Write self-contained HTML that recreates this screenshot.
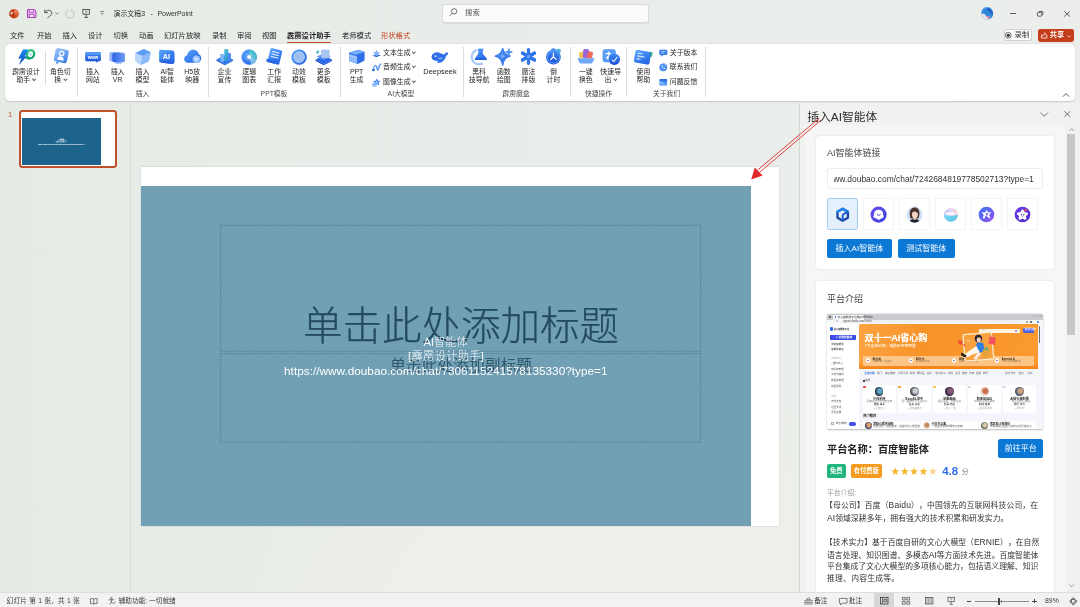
<!DOCTYPE html>
<html lang="zh-CN">
<head>
<meta charset="utf-8">
<title>演示文稿3 - PowerPoint</title>
<style>
html,body{margin:0;padding:0}
html{background:#e8ece8}
body{width:1080px;height:607px;overflow:hidden;position:relative;background:radial-gradient(ellipse 420px 230px at 600px 600px,#f0f0ea 0%,rgba(240,240,234,0) 100%),linear-gradient(90deg,#e6ebe6 0%,#e9ede9 40%,#ebeeea 100%);
 font-family:"Liberation Sans","Noto Sans CJK SC",sans-serif;color:#333;font-size:7.5px;line-height:1;text-spacing-trim:space-all;filter:blur(.3px)}
.abs{position:absolute}
.t{position:absolute;white-space:nowrap;line-height:1}
.c{transform:translateX(-50%);text-align:center}
svg{position:absolute;overflow:visible}

/* ---------- title bar ---------- */
#search{left:441.8px;top:4px;width:205.4px;height:17px;background:#fafbfa;border:0.6px solid #d9dcd9;border-radius:3px;box-shadow:0 0.6px 0 #cdd1cd}
/* ---------- tabs ---------- */
.tab{top:32.3px;font-size:7.3px;color:#1f1f1f}
/* ---------- ribbon ---------- */
#ribbon{left:5px;top:44px;width:1070px;height:56.5px;background:#fff;border-radius:5px;box-shadow:0 0.5px 1.6px rgba(0,0,0,.15)}
.sep{position:absolute;width:0.6px;background:#d9dcd9;top:47px;height:50px}
.rl{font-size:6.9px;color:#262626;line-height:8.5px;top:67.7px;text-align:center;transform:translateX(-50%);position:absolute;white-space:nowrap}
.gl{font-size:6.8px;color:#4a4a4a;top:90.5px;position:absolute;white-space:nowrap;transform:translateX(-50%)}
.sm{font-size:6.9px;color:#262626;position:absolute;white-space:nowrap}
.chv{display:inline-block;width:1.9px;height:1.9px;border-right:.6px solid #6a6a6a;border-bottom:.6px solid #6a6a6a;transform:rotate(45deg) translate(-.8px,-1.3px);margin-left:.6px}
.ri{filter:drop-shadow(0 .4px .7px rgba(70,130,240,.38))}
/* ---------- slide area ---------- */
#thumbpane{left:0;top:102.6px;width:130px;height:489.8px;border-right:0.7px solid #d6dad6}
#thumb{left:19.3px;top:110px;width:93.9px;height:53.6px;border:2px solid #bf512d;border-radius:3.4px;background:#fff}
#thumbin{left:22px;top:118px;width:79px;height:47px;background:#1c648b}
#slidewhite{left:141px;top:167px;width:638px;height:359px;background:#fff;box-shadow:0 0 1px rgba(0,0,0,.25)}
#slideblue{left:141px;top:186px;width:610px;height:340px;background:#719fb4}
.ph{position:absolute;border:0.6px dotted rgba(50,92,112,.75);box-sizing:border-box}
/* ---------- task pane ---------- */
#pane{left:799.2px;top:102.6px;width:280.8px;height:489.8px;background:#f0f2f0;border-left:0.7px solid #d3d7d3}
#web{left:805px;top:124.6px;width:261px;height:467.8px;background:#f5f6f5;border-radius:4px 4px 0 0}
.card{position:absolute;background:#fff;border-radius:3px;box-shadow:0 0 1.5px rgba(0,0,0,.16)}
.btn{position:absolute;background:#0a78d4;color:#fff;border-radius:2px;text-align:center;font-size:8.2px;white-space:nowrap}
.ib{position:absolute;width:30.8px;height:31.2px;top:198.4px;background:#fff;border:0.6px solid #f5f5f7;box-shadow:0 0 1.2px rgba(90,90,140,.10);border-radius:2.5px;box-sizing:border-box}
.pt{position:absolute;left:827px;font-size:8.3px;color:#333;white-space:nowrap;line-height:1;letter-spacing:-0.02px}
.la{font-size:8.5px}
/* ---------- status bar ---------- */
#status{left:0;top:592.4px;width:1080px;height:15px;background:#f1f3f1;border-top:0.6px solid #dcdfdc}
.st{top:597.9px;font-size:6.7px;color:#3a3a3a}
</style>
</head>
<body>

<!-- ================= TITLE BAR ================= -->
<div id="titlebar">
 <svg style="left:8.5px;top:8.5px" width="10" height="10" viewBox="0 0 10 10"><circle cx="5" cy="4.8" r="4.7" fill="#c9421f"/><path d="M5 .1 A4.7 4.7 0 0 1 9.7 4.8 L5 4.8Z" fill="#ee7a55"/><path d="M5 4.8 L9.7 4.8 A4.7 4.7 0 0 1 7.4 8.8Z" fill="#dd5a36"/><rect x=".6" y="2.4" width="4.6" height="4.8" rx=".7" fill="#b5330f"/><text x="2.9" y="6.3" font-family="Liberation Sans,sans-serif" font-weight="700" font-size="4.2" fill="#fff" text-anchor="middle">P</text></svg>
 <svg style="left:27px;top:9px" width="9.4" height="9" viewBox="0 0 9.4 9"><path d="M.5 .5 H7.4 L8.9 2 V8.5 H.5 Z" fill="#e7b6ee" stroke="#a53db6" stroke-width="1"/><rect x="2.3" y=".6" width="4.2" height="2.6" fill="#f6e6f8" stroke="#a53db6" stroke-width=".8"/><rect x="2.3" y="5.4" width="4.6" height="3" fill="#f6e6f8" stroke="#a53db6" stroke-width=".8"/></svg>
 <svg style="left:43.5px;top:8.8px" width="9" height="9.4" viewBox="0 0 9 9.4"><path d="M.8 .6 V3.6 H3.8" fill="none" stroke="#444" stroke-width=".9"/><path d="M.9 3.5 C2.6 1 6 .6 7.4 2.6 C8.6 4.4 7.4 6.4 3.4 8.9" fill="none" stroke="#444" stroke-width=".9"/></svg>
 <svg style="left:55.4px;top:11.8px" width="4" height="3" viewBox="0 0 4 3"><path d="M.4 .6 L2 2.2 L3.6 .6" fill="none" stroke="#555" stroke-width=".7"/></svg>
 <svg style="left:65px;top:8.6px" width="10" height="10" viewBox="0 0 10 10"><path d="M6.6 1.2 A4.1 4.1 0 1 1 3.2 1.3" fill="none" stroke="#b9bdb9" stroke-width=".85"/><path d="M5.8 .2 L6.9 1.3 L5.6 2.4" fill="none" stroke="#b9bdb9" stroke-width=".8"/></svg>
 <svg style="left:82px;top:9px" width="8.4" height="9" viewBox="0 0 8.4 9"><path d="M.2 .5 H8.2 M.9 .6 V5.2 H7.5 V.6 M4.2 5.2 V8.2 M2.2 8.4 H6.2" fill="none" stroke="#444" stroke-width=".85"/><path d="M3.2 2.2 H5.6 M4.2 2.2 V4" stroke="#666" stroke-width=".6"/></svg>
 <svg style="left:100px;top:11px" width="4.4" height="4.4" viewBox="0 0 4.4 4.4"><path d="M.5 .5 H3.9" stroke="#555" stroke-width=".7"/><path d="M.8 1.8 L2.2 3.4 L3.6 1.8" fill="none" stroke="#555" stroke-width=".7"/></svg>
 <div class="t" style="left:113.6px;top:11.1px;font-size:6.9px;color:#2f2f2f">演示文稿3<span style="display:inline-block;width:5.6px"></span>-<span style="display:inline-block;width:4.6px"></span>PowerPoint</div>
 <div class="abs" id="search"></div>
 <svg style="left:448.8px;top:8.4px" width="8.6" height="8.6" viewBox="0 0 8 8"><circle cx="4.8" cy="3.1" r="2.5" fill="none" stroke="#555" stroke-width=".75"/><path d="M3 4.9 L.6 7.4" stroke="#555" stroke-width=".8"/></svg>
 <div class="t" style="left:465px;top:9.2px;font-size:7.4px;color:#555">搜索</div>
 <!-- avatar -->
 <svg style="left:981px;top:7.2px" width="12.4" height="12.8" viewBox="0 0 12.4 12.8"><defs><clipPath id="av"><ellipse cx="6.2" cy="6.4" rx="6" ry="6.3"/></clipPath></defs><g clip-path="url(#av)"><rect width="12.4" height="12.8" fill="#2f86dc"/><path d="M0 4 C3 1 8 0 12.4 3 L12.4 0 L0 0Z" fill="#5aa9ee"/><path d="M-1 7.4 C2 5.6 4.4 7.2 5.4 9.4 C6.2 10 8 9.6 8.6 10.6 L7 13.4 L-1 13.4Z" fill="#eadfe8"/><circle cx="7.4" cy="10.2" r="1.3" fill="#e58c98"/><path d="M6.6 1 C10 1.4 12.2 4.4 11.6 8.6 C10.4 6 8.6 3.6 5.6 3Z" fill="#1b62c0"/></g></svg>
 <svg style="left:1010px;top:12.7px" width="6" height="1" viewBox="0 0 6 1"><path d="M0 .5 H6" stroke="#3a3a3a" stroke-width=".8"/></svg>
 <svg style="left:1036.6px;top:11px" width="6.4" height="5.6" viewBox="0 0 6.4 5.6"><rect x=".4" y="1.4" width="4.4" height="3.8" rx=".9" fill="none" stroke="#3a3a3a" stroke-width=".8"/><path d="M1.8 1.2 Q1.9 .4 2.8 .4 H5 Q6 .4 6 1.4 V3 Q6 3.8 5.2 3.9" fill="none" stroke="#3a3a3a" stroke-width=".8"/></svg>
 <svg style="left:1064.2px;top:10.6px" width="6.2" height="5.8" viewBox="0 0 6.2 5.8"><path d="M.3 .3 L5.9 5.5 M5.9 .3 L.3 5.5" stroke="#3a3a3a" stroke-width=".8"/></svg>
 <!-- record / share -->
 <div class="abs" style="left:1003.6px;top:29px;width:28.6px;height:12px;background:#fdfdfd;border:.6px solid #cfd2cf;border-radius:2px;box-sizing:border-box"></div>
 <svg style="left:1005.4px;top:31.8px" width="6.6" height="6.6" viewBox="0 0 6.6 6.6"><circle cx="3.3" cy="3.3" r="2.9" fill="none" stroke="#333" stroke-width=".7"/><circle cx="3.3" cy="3.3" r="1.6" fill="#333"/></svg>
 <div class="t" style="left:1014.6px;top:31.4px;font-size:7.3px;color:#2b2b2b">录制</div>
 <div class="abs" style="left:1038px;top:29px;width:36px;height:12.8px;background:#c43e1c;border-radius:2.4px"></div>
 <svg style="left:1040.6px;top:32px" width="6.4" height="6.6" viewBox="0 0 6.4 6.6"><path d="M1.4 3 H.5 V6.1 H5.9 V3 H5" fill="none" stroke="#fff" stroke-width=".75"/><path d="M1.8 4.4 C2 2.6 3 1.8 4.4 1.8 M3.4 .5 L4.8 1.8 L3.4 3.1" fill="none" stroke="#fff" stroke-width=".75"/></svg>
 <div class="t" style="left:1049.8px;top:31.3px;font-size:7.3px;color:#fff;font-weight:700">共享</div>
 <svg style="left:1067.4px;top:34.6px" width="4" height="3" viewBox="0 0 4 3"><path d="M.5 .6 L2 2.1 L3.5 .6" fill="none" stroke="#fff" stroke-width=".7"/></svg>
</div>

<!-- ================= TABS ================= -->
<div id="tabs">
 <div class="t tab" style="left:10px">文件</div>
 <div class="t tab" style="left:37px">开始</div>
 <div class="t tab" style="left:62.5px">插入</div>
 <div class="t tab" style="left:88px">设计</div>
 <div class="t tab" style="left:113.5px">切换</div>
 <div class="t tab" style="left:139px">动画</div>
 <div class="t tab" style="left:164px">幻灯片放映</div>
 <div class="t tab" style="left:212px">录制</div>
 <div class="t tab" style="left:237px">审阅</div>
 <div class="t tab" style="left:262px">视图</div>
 <div class="t tab" style="left:287px;font-weight:700;color:#222">霹雳设计助手</div>
 <div class="abs" style="left:287.4px;top:41.6px;width:43.6px;height:1.3px;background:#c0502c;border-radius:1px"></div>
 <div class="t tab" style="left:342px">老师模式</div>
 <div class="t tab" style="left:381px;color:#c2421d">形状格式</div>
</div>

<!-- ================= RIBBON ================= -->
<div class="abs" id="ribbon"></div>
<div id="ribboncontent">
<svg width="0" height="0" style="left:0;top:0">
 <defs>
  <linearGradient id="gB" x1="0" y1="0" x2="1" y2="1"><stop offset="0" stop-color="#5aa6ff"/><stop offset="1" stop-color="#1e5fe2"/></linearGradient>
  <linearGradient id="gL" x1="0" y1="0" x2="1" y2="1"><stop offset="0" stop-color="#b9dcff"/><stop offset="1" stop-color="#6ea8f5"/></linearGradient>
  <linearGradient id="gD" x1="0" y1="0" x2="0" y2="1"><stop offset="0" stop-color="#3f8af6"/><stop offset="1" stop-color="#1a4fd0"/></linearGradient>
  <linearGradient id="gG" x1="0" y1="0" x2="1" y2="1"><stop offset="0" stop-color="#3fd08a"/><stop offset="1" stop-color="#0b9a5a"/></linearGradient>
  <linearGradient id="gT" x1="0" y1="0" x2="1" y2="1"><stop offset="0" stop-color="#56c8d8"/><stop offset="1" stop-color="#2a8ad8"/></linearGradient>
  <linearGradient id="gR" x1="0" y1="0" x2="1" y2="1"><stop offset="0" stop-color="#9ccafc"/><stop offset="1" stop-color="#3878e8"/></linearGradient>
  <linearGradient id="gP" x1="0" y1="0" x2="0" y2="1"><stop offset="0" stop-color="#1f8af2"/><stop offset="1" stop-color="#0b4fb6"/></linearGradient>
  <linearGradient id="gV" x1="0" y1="0" x2="1" y2="0"><stop offset="0" stop-color="#2b62e4"/><stop offset="1" stop-color="#6f9cf5"/></linearGradient>
 </defs>
</svg>
<div class="sep" style="left:44.5px;top:50.5px;height:34.5px"></div>
<div class="sep" style="left:76.6px;top:46.5px;height:50.5px"></div>
<div class="sep" style="left:207.6px;top:46.5px;height:50.5px"></div>
<div class="sep" style="left:339.6px;top:46.5px;height:50.5px"></div>
<div class="sep" style="left:462.6px;top:46.5px;height:50.5px"></div>
<div class="sep" style="left:569.6px;top:46.5px;height:50.5px"></div>
<div class="sep" style="left:626.4px;top:46.5px;height:50.5px"></div>
<div class="sep" style="left:705.4px;top:46.5px;height:50.5px"></div>
<svg class="ri" style="left:17.7px;top:48.6px" width="16.6" height="16.6" viewBox="0 0 16 16"><ellipse cx="12.1" cy="5" rx="3.4" ry="3.9" fill="#f4fcf8" stroke="url(#gG)" stroke-width="2.1" transform="rotate(24 12.1 5)"/><path d="M6.4 8 C8 10.4 11 10.6 13.4 9.4 L9.6 7.4Z" fill="#12a864"/>
<path d="M4.9 .5 L9.9 .5 L6.7 7 L8.6 7 L.9 15.5 L3.5 9.2 L.3 9.2 Z" fill="url(#gP)"/>
<path d="M9.6 5.4 L13.8 3.6 L12.6 5.4 L13 6.8 L11.4 6.2 Z" fill="#a9dcf6"/></svg>
<div class="rl" style="left:26px">霹雳设计<br>助手 <span class="chv"></span></div>
<svg class="ri" style="left:51.5px;top:47.5px" width="17.6" height="17.6" viewBox="0 0 16 16"><g transform="rotate(12 8 8)"><rect x="2.2" y="0.8" width="12" height="12.2" rx="2.2" fill="url(#gR)"/><path d="M5 13 L5 15.6 L8 13 Z" fill="#5c9af2"/>
<circle cx="8.2" cy="4.9" r="2" fill="none" stroke="#fff" stroke-width="1.1"/><path d="M5.2 11 C5.2 8.4 6.6 7.6 8.2 7.6 C9.8 7.6 11.2 8.4 11.2 11 Z" fill="#fff"/></g></svg>
<div class="rl" style="left:60.3px">角色切<br>换 <span class="chv"></span></div>
<svg class="ri" style="left:84.8px;top:49.0px" width="16" height="16" viewBox="0 0 16 16"><path d="M1.6 3 H14.4 A1.4 1.4 0 0 1 15.8 4.4 V10.8 A1.4 1.4 0 0 1 14.4 12.2 H13.2 L11.6 13.8 L11.2 12.2 H1.6 A1.4 1.4 0 0 1 0.2 10.8 V4.4 A1.4 1.4 0 0 1 1.6 3 Z" fill="url(#gD)"/><rect x="0.2" y="3" width="15.6" height="3" rx="1.4" fill="#6aa9fb" opacity=".55"/>
<text x="8" y="9.6" font-family="Liberation Sans,sans-serif" font-weight="700" font-size="4.6" fill="#fff" text-anchor="middle">www</text></svg>
<div class="rl" style="left:92.8px">插入<br>网站</div>
<svg class="ri" style="left:109.4px;top:49.2px" width="16.4" height="16.4" viewBox="0 0 16 16"><rect x="0.5" y="3" width="11" height="9" rx="1.8" fill="#8fb4f8"/><rect x="3.2" y="3.6" width="12.4" height="9.4" rx="2" fill="url(#gV)"/><rect x="6" y="13" width="6" height="1.2" rx=".6" fill="#7fa6f4"/></svg>
<div class="rl" style="left:117.6px">插入<br>VR</div>
<svg class="ri" style="left:133.7px;top:47.9px" width="17.4" height="17.4" viewBox="0 0 16 16"><path d="M1.2 4.6 L9 1 L15.4 4 L13.6 12.4 L6 15.6 L1 11.6 Z" fill="#cfe3ff"/><path d="M1.2 4.6 L9 1 L15.4 4 L7.6 7.4 Z" fill="#5b9cf6"/><path d="M7.6 7.4 L15.4 4 L13.6 12.4 L6 15.6 Z" fill="#8dbbfa"/><path d="M1.2 4.6 L7.6 7.4 L6 15.6 L1 11.6 Z" fill="#b7d5fd"/></svg>
<div class="rl" style="left:142.4px">插入<br>模型</div>
<svg class="ri" style="left:158.3px;top:47.5px" width="17.8" height="17.8" viewBox="0 0 16 16"><path d="M2.6 1.6 L12.4 2.2 Q14.8 2.4 14.8 4.8 L14.8 12.2 Q14.8 14.6 12.4 14.4 L2.8 13 Q1 12.8 1 10.8 L1 3.2 Q1 1.5 2.6 1.6 Z" fill="url(#gB)"/><path d="M1.2 10.8 L14.8 12.2 Q14.8 14.6 12.4 14.4 L2.8 13 Q1.2 12.8 1.2 10.8Z" fill="#2a66df"/>
<text x="7.6" y="10" font-family="Liberation Sans,sans-serif" font-weight="700" font-size="6.6" fill="#fff" text-anchor="middle">AI</text></svg>
<div class="rl" style="left:167.2px">AI智<br>能体</div>
<svg class="ri" style="left:183.5px;top:47.7px" width="17.4" height="17.4" viewBox="0 0 16 16"><path d="M4 13.6 C1.6 13.6 0.2 12 0.2 10.2 C0.2 8.4 1.6 7.2 3 7 C3.2 3.8 5.6 1.6 8.4 1.6 C11 1.6 13 3.4 13.6 5.8 C15 6.4 15.8 7.8 15.8 9.4 C15.8 11.8 14 13.6 12 13.6 Z" fill="url(#gB)"/><circle cx="11.4" cy="10.4" r="3.4" fill="#9cc5fb"/><path d="M10.4 8.8 L13 10.4 L10.4 12 Z" fill="#e9f3ff"/></svg>
<div class="rl" style="left:192.2px">H5放<br>映器</div>
<svg class="ri" style="left:215.6px;top:47.8px" width="17.6" height="17.6" viewBox="0 0 16 16"><path d="M0.4 10.6 L8 6.6 L15.6 10.6 L8 14.8 Z" fill="#2f74ea"/><path d="M0.4 10.6 L8 14.8 L8 15.8 L0.4 11.6Z" fill="#1f58cf"/><path d="M15.6 10.6 L8 14.8 L8 15.8 L15.6 11.6Z" fill="#2a66de"/><rect x="7.6" y="1" width="3.4" height="11" rx=".6" fill="url(#gT)"/><rect x="4" y="5.4" width="3.2" height="7" rx=".6" fill="#7db6f6"/><path d="M11 4 L13.6 5 L13.6 11 L11 12Z" fill="#4d8ff0"/></svg>
<div class="rl" style="left:224.4px">企业<br>宣传</div>
<svg class="ri" style="left:241.1px;top:48.5px" width="16.2" height="16.2" viewBox="0 0 16 16"><circle cx="8" cy="8" r="7.6" fill="url(#gB)"/><path d="M8 8 L8 .4 A7.6 7.6 0 0 1 15.3 10.2 Z" fill="#49bfcf"/><path d="M8 8 L15.3 10.2 A7.6 7.6 0 0 1 10 15.3 Z" fill="#8fd0e6" opacity=".8"/><circle cx="8" cy="8" r="2" fill="#fff"/><circle cx="8" cy="8" r="3.2" fill="none" stroke="#fff" stroke-opacity=".35" stroke-width="1"/></svg>
<div class="rl" style="left:249.2px">逻辑<br>图表</div>
<svg class="ri" style="left:265.5px;top:47.7px" width="17.4" height="17.4" viewBox="0 0 16 16"><g transform="rotate(14 8 8)"><rect x="2.6" y="1" width="11" height="13.4" rx="1.2" fill="url(#gB)"/><path d="M1.4 11.6 H11.4 V14.4 H2.8 Q1.4 14.4 1.4 13 Z" fill="#2b67e0"/><path d="M4.6 3.8 H11.6 M4.6 6.2 H11.6 M4.6 8.6 H11.6" stroke="#d9e9ff" stroke-width="1.1"/></g></svg>
<div class="rl" style="left:274.2px">工作<br>汇报</div>
<svg class="ri" style="left:290.9px;top:48.8px" width="16.2" height="16.2" viewBox="0 0 16 16"><circle cx="8" cy="8" r="7.6" fill="url(#gB)"/><circle cx="8" cy="8" r="5.3" fill="#9dbff4"/><circle cx="8" cy="8" r="5.3" fill="none" stroke="#c9defc" stroke-width=".7"/></svg>
<div class="rl" style="left:299px">动效<br>模板</div>
<svg class="ri" style="left:314.9px;top:47.8px" width="17.6" height="17.6" viewBox="0 0 16 16"><path d="M0.6 10.4 L8 7 L15.4 10.4 L8 14.4 Z" fill="#2b6ae6"/><path d="M0.6 10.4 L8 14.4 L8 15.8 L0.6 11.8Z" fill="#1c52c8"/><path d="M15.4 10.4 L8 14.4 L8 15.8 L15.4 11.8Z" fill="#2560d8"/><path d="M1.6 7.8 L8 5 L14.4 7.8 L8 11 Z" fill="#5a98f3"/><rect x="5.6" y="1.6" width="7.6" height="7.4" rx="1" fill="#a9c4ee"/><path d="M1 4.4 L3.8 3 M2.4 2.2 L2.4 5.2" stroke="#3bb8c8" stroke-width="1"/></svg>
<div class="rl" style="left:323.7px">更多<br>模板</div>
<svg class="ri" style="left:347.9px;top:48.3px" width="17.4" height="17.4" viewBox="0 0 16 16"><path d="M1 4.4 L9.6 1.6 L15.2 3.6 L15.2 11.6 L9 14.8 L1 12 Z" fill="#2f6fe6"/><path d="M1 4.4 L9.6 1.6 L15.2 3.6 L7 6.2 Z" fill="#77b0fa"/><path d="M1 5.6 L7.4 7.4 Q8.4 7.7 8.4 8.8 L8.4 14.6 L1 12 Z" fill="#8ebcfa"/><path d="M2 6.6 L7.4 8.2 L7.4 9 L2 7.4Z" fill="#d9e9ff" opacity=".7"/></svg>
<div class="rl" style="left:356.6px">PPT<br>生成</div>
<svg class="ri" style="left:431.3px;top:48.7px" width="17.4" height="17.4" viewBox="0 0 16 16"><path d="M0.6 7.4 C0.6 4.4 3.2 3 6 3.2 C8.6 3.4 10 4.8 11.6 5 C12.8 5.2 13.4 4.4 13.2 3 C13.8 3.6 14.4 3.8 15.8 3.2 C15.8 4.8 14.8 5.8 13.8 6.2 C13.2 9.6 10.6 12.6 7 12.6 C6.2 12.6 5.6 12.4 5.2 12.2 C6 11.8 6.6 11.2 6.8 10.6 C3.6 11.4 0.6 10.2 0.6 7.4 Z" fill="#2f6fe8"/><circle cx="4.2" cy="6.6" r=".8" fill="#fff"/><path d="M6.8 8.2 C8 9.2 9.4 9 10.4 8" stroke="#fff" stroke-width=".7" fill="none"/></svg>
<div class="rl" style="left:440px"><span style="font-size:7.4px">Deepseek</span></div>
<svg class="ri" style="left:470.3px;top:47.7px" width="17.6" height="17.6" viewBox="0 0 16 16"><path d="M5.4 2 A6.6 6.6 0 1 0 11 14.2" fill="none" stroke="#a9c8f8" stroke-width="1.7" stroke-linecap="round"/><path d="M7.2 .6 H12 V2.6 H11.4 L11.8 5.4 L15 9.4 Q15.8 11 14 11 H5.4 Q3.8 11 4.6 9.4 L7.4 5.4 L7.8 2.6 H7.2 Z" fill="url(#gB)"/><path d="M5.2 9 L14.6 9 Q15.6 11 14 11 H5.4 Q4 11 5.2 9Z" fill="#2560dc"/></svg>
<div class="rl" style="left:479.1px">黑科<br>技导航</div>
<svg class="ri" style="left:495.0px;top:47.7px" width="17.6" height="17.6" viewBox="0 0 16 16"><path d="M7 .6 C7.9 4.6 9.4 6 13.8 7.4 C9.4 8.6 7.9 10.4 7 15.4 C6 10.4 4.6 8.6 .2 7.4 C4.6 6 6 4.6 7 .6 Z" fill="url(#gB)" stroke="#3f80ee" stroke-width="1.3" stroke-linejoin="round"/><path d="M12.6 .4 C12.9 2.6 13.4 3.2 15.8 3.6 C13.4 4.1 12.9 4.8 12.6 7 C12.3 4.8 11.8 4.1 9.4 3.6 C11.8 3.2 12.3 2.6 12.6 .4Z" fill="#4a8cf2" stroke="#4a8cf2" stroke-width=".5"/><circle cx="7" cy="7.6" r="1.8" fill="#9cc2f9" opacity=".6"/></svg>
<div class="rl" style="left:503.8px">函数<br>绘图</div>
<svg class="ri" style="left:520.0px;top:48.3px" width="17" height="17" viewBox="0 0 16 16"><g stroke="url(#gD)" stroke-width="3" stroke-linecap="round"><path d="M8 1.6 V14.4"/><path d="M2.4 4.8 L13.6 11.2"/><path d="M13.6 4.8 L2.4 11.2"/></g><g stroke="#2f74ea" stroke-width="3" stroke-linecap="round"><path d="M8 1.6 V14.4"/><path d="M2.4 4.8 L13.6 11.2"/><path d="M13.6 4.8 L2.4 11.2"/></g><circle cx="8" cy="8" r="1.6" fill="#6aa9fb"/></svg>
<div class="rl" style="left:528.5px">魔法<br>排版</div>
<svg class="ri" style="left:545.0px;top:48.4px" width="16.8" height="16.8" viewBox="0 0 16 16"><circle cx="12.8" cy="2.8" r="2.2" fill="#4bb5d6"/><rect x="6" y=".4" width="4" height="2" rx=".8" fill="#4a8cf2"/><circle cx="8" cy="8.6" r="7" fill="url(#gD)"/><circle cx="8" cy="8.6" r="5.8" fill="none" stroke="#6aa9fb" stroke-width=".8"/><path d="M8 4.8 V8.6 L5.4 11 M8 8.6 L10.8 10.8" stroke="#fff" stroke-width="1.1" fill="none" stroke-linecap="round"/></svg>
<div class="rl" style="left:553.4px">倒<br>计时</div>
<svg class="ri" style="left:576.9px;top:47.5px" width="17.8" height="17.8" viewBox="0 0 16 16"><path d="M.6 9.6 L3.4 7.6 H13 L15.6 9.6 L13.4 13.6 H2.8 Z" fill="#9cc6fa"/><path d="M.6 9.6 H15.6 L13.4 13.6 H2.8Z" fill="#6fa8f5"/><rect x="2" y="3.6" width="4.4" height="5.6" rx="1" fill="#f4c64a" transform="rotate(-12 4 6)"/><rect x="5.4" y="1" width="5" height="8" rx="1" fill="#9a63e0" transform="rotate(6 8 5)"/><rect x="9.4" y="3.2" width="4.6" height="6" rx="1" fill="#ef6a5a" transform="rotate(18 11.6 6)"/></svg>
<div class="rl" style="left:585.8px">一键<br>换色</div>
<svg class="ri" style="left:601.7px;top:47.6px" width="18" height="18" viewBox="0 0 16 16"><rect x=".6" y="1" width="11.6" height="11.6" rx="2.4" fill="#5a9df5"/><path d="M3 5 H7 M5.4 3.2 L7.2 5 L5.4 6.8 M8.4 8.4 H4.4 M6 6.8 L4.2 8.6 L6 10.4" stroke="#fff" stroke-width="1" fill="none"/><circle cx="11" cy="10" r="5" fill="url(#gD)"/><path d="M8.8 10.4 L10.6 12 L13.4 8.2" stroke="#cfe3ff" stroke-width="1.1" fill="none"/></svg>
<div class="rl" style="left:610.7px">快速导<br>出 <span class="chv"></span></div>
<svg class="ri" style="left:634.2px;top:47.8px" width="18.4" height="18.4" viewBox="0 0 16 16"><g transform="rotate(10 8 8)"><rect x="12" y="2.4" width="3.4" height="4" rx=".8" fill="#2fb36f"/><rect x=".6" y="2.6" width="13.6" height="11" rx="1.6" fill="url(#gB)"/><path d="M2.6 5.4 H7 M2.6 7.8 H9 M2.6 10.2 H6" stroke="#d9e9ff" stroke-width="1"/></g></svg>
<div class="rl" style="left:643.4px">使用<br>帮助</div>
<svg class="ri" style="left:371.5px;top:48.5px" width="9" height="9" viewBox="0 0 16 16"><path d="M8 1.2 L9.8 5.6 L14.4 5.8 L10.8 8.6 L12 13 L8 10.4 L4 13 L5.2 8.6 L1.6 5.8 L6.2 5.6 Z" fill="#7fb2f7"/><path d="M0.6 12.6 C4 9.6 7 12.6 10 11 C12.4 9.8 14 10.6 15.6 12.4 C13 11.6 12 12.8 10 13.8 C6.6 15.4 4.4 11.6 0.6 12.6Z" fill="#2a66de"/></svg>
<div class="sm" style="left:383px;top:49.9px">文本生成<span style="display:inline-block;width:1.2px"></span><span class="chv"></span></div>
<svg class="ri" style="left:371.5px;top:62.9px" width="9" height="9" viewBox="0 0 16 16"><path d="M1 12 C3 12 3.4 4 6 4 C8.6 4 8.2 12.6 10.6 12.6 C12.8 12.6 12.6 2 15.4 2" fill="none" stroke="#5b9bf3" stroke-width="2.2" stroke-linecap="round"/><circle cx="2.6" cy="12.4" r="2.4" fill="#2f6fe6"/><circle cx="11.4" cy="7" r="2.2" fill="#8fbcf9"/></svg>
<div class="sm" style="left:383px;top:64.3px">音频生成<span style="display:inline-block;width:1.2px"></span><span class="chv"></span></div>
<svg class="ri" style="left:371.5px;top:77.5px" width="9" height="9" viewBox="0 0 16 16"><path d="M8.6 .8 L10.4 5 L15 5.4 L11.6 8.4 L12.6 13 L8.6 10.6 L4.6 13 L5.6 8.4 L2.2 5.4 L6.8 5 Z" fill="#3f83f0"/><rect x=".8" y="8.6" width="7.2" height="6.6" rx="1.2" fill="#8ebcfa"/><circle cx="8.6" cy="7.2" r="1.6" fill="#cfe3ff"/></svg>
<div class="sm" style="left:383px;top:78.9px">图像生成<span style="display:inline-block;width:1.2px"></span><span class="chv"></span></div>
<svg class="ri" style="left:658.7px;top:48.5px" width="8.6" height="8.6" viewBox="0 0 16 16"><path d="M2 1.2 H14 Q15.4 1.2 15.4 2.6 V9.6 Q15.4 11 14 11 H8 L4.4 14.6 V11 H2 Q.6 11 .6 9.6 V2.6 Q.6 1.2 2 1.2Z" fill="#3d7fe8"/><path d="M4 4.6 H12 M4 7.4 H9.6" stroke="#cfe3ff" stroke-width="1.2"/></svg>
<div class="sm" style="left:669.8px;top:49.7px">关于版本</div>
<svg class="ri" style="left:658.7px;top:63.0px" width="8.6" height="8.6" viewBox="0 0 16 16"><circle cx="8" cy="8" r="7.2" fill="#4a90f2"/><path d="M5 4.4 C4.6 7.8 7.6 11.2 11.4 11 L11.6 9.2 L9.6 8.6 L8.8 9.4 C7.8 9 7 8 6.8 7 L7.6 6.2 L6.8 4.2 Z" fill="#e4efff"/><circle cx="12.4" cy="3.4" r="2" fill="#8fbcf9"/></svg>
<div class="sm" style="left:669.8px;top:64.2px">联系我们</div>
<svg class="ri" style="left:658.7px;top:77.6px" width="8.6" height="8.6" viewBox="0 0 16 16"><rect x="1" y="2" width="14" height="12" rx="2" fill="#4a90f2"/><rect x="1" y="2" width="14" height="4" rx="2" fill="#2f6fe6"/><path d="M4 9 H8 M4 11.4 H11" stroke="#d9e9ff" stroke-width="1.1"/><circle cx="3" cy="8" r="2" fill="#8fbcf9"/></svg>
<div class="sm" style="left:669.8px;top:78.8px">问题反馈</div>
<div class="gl" style="left:142.5px">插入</div>
<div class="gl" style="left:274px">PPT模板</div>
<div class="gl" style="left:401px">AI大模型</div>
<div class="gl" style="left:516px">霹雳魔盒</div>
<div class="gl" style="left:598.5px">快捷操作</div>
<div class="gl" style="left:666.6px">关于我们</div>
<svg style="left:1062px;top:92px" width="8" height="6" viewBox="0 0 8 6"><path d="M1 4.6 L4 1.6 L7 4.6" fill="none" stroke="#444" stroke-width=".9"/></svg>
</div>

<!-- ================= SLIDE AREA ================= -->
<div class="abs" id="thumbpane"></div>
<div class="t" style="left:8px;top:111px;font-size:7.5px;color:#c0502c">1</div>
<div class="abs" id="thumb"></div>
<div class="abs" id="thumbin"></div>
<div class="abs" id="slidewhite"></div>
<div class="abs" id="slideblue"></div>
<div id="slidecontent">
 <svg width="1080" height="607" style="left:0;top:0"><rect x="220.6" y="225.3" width="480" height="126" fill="none" stroke="#2f5a70" stroke-opacity=".8" stroke-width=".55" stroke-dasharray="1 .8"/><rect x="220.6" y="353.6" width="480" height="88.4" fill="none" stroke="#2f5a70" stroke-opacity=".8" stroke-width=".55" stroke-dasharray="1 .8"/></svg>
 <div class="t c" style="left:461px;top:305px;font-size:39.5px;font-weight:300;color:#244a5f;-webkit-text-stroke:.25px #244a5f;line-height:42px">单击此处添加标题</div>
 <div class="t c" style="left:461px;top:357.4px;font-size:15.8px;font-weight:300;color:#244a5f;-webkit-text-stroke:.15px #244a5f;line-height:18px">单击此处添加副标题</div>
 <div class="t c" style="left:445.6px;top:337.2px;font-size:11.2px;font-weight:300;color:#f4f8fa">AI智能体</div>
 <div class="t c" style="left:446.2px;top:350.6px;font-size:11.2px;font-weight:300;color:#f4f8fa;letter-spacing:.35px">[霹雳设计助手]</div>
 <div class="t c" style="left:445.8px;top:365.6px;font-size:11.8px;color:#fff">https://www.doubao.com/chat/7306115241578135330?type=1</div>
 <!-- thumbnail text -->
 <div class="t c" style="left:61.4px;top:139.2px;font-size:1.5px;color:#fff;font-weight:700">AI智能体</div>
 <div class="t c" style="left:61.4px;top:141.3px;font-size:1.5px;color:#fff;font-weight:700;letter-spacing:.15px">[霹雳设计助手]</div>
 <div class="t c" style="left:61.4px;top:143.5px;font-size:1.64px;color:#fff;font-weight:700">https://www.doubao.com/chat/7306115241578135330?type=1</div>
</div>

<!-- ================= TASK PANE ================= -->
<div class="abs" id="pane"></div>
<div class="abs" id="web"></div>
<div id="panecontent">
<div class="t" style="left:807.2px;top:110.8px;font-size:11.8px;color:#2f2f2f;line-height:13px">插入AI智能体</div>
<svg style="left:1039.6px;top:112px" width="8.4" height="5" viewBox="0 0 8.4 5"><path d="M.4 .5 L4.2 4.3 L8 .5" fill="none" stroke="#555" stroke-width=".8"/></svg>
<svg style="left:1063.6px;top:111.2px" width="6.6" height="6.2" viewBox="0 0 6.6 6.2"><path d="M.3 .3 L6.3 5.9 M6.3 .3 L.3 5.9" stroke="#555" stroke-width=".8"/></svg>
<div class="abs" style="left:1066px;top:125px;width:11px;height:465px;background:#f1f2f1"></div>
<div class="abs" style="left:1067px;top:133.6px;width:8.4px;height:201.4px;background:#c6c7c6"></div>
<svg style="left:1068.6px;top:127.6px" width="5.4" height="3.4" viewBox="0 0 5.4 3.4"><path d="M.4 3 L2.7 .6 L5 3" fill="none" stroke="#777" stroke-width=".7"/></svg>
<svg style="left:1068.6px;top:584.4px" width="5.4" height="3.4" viewBox="0 0 5.4 3.4"><path d="M.4 .4 L2.7 2.8 L5 .4" fill="none" stroke="#777" stroke-width=".7"/></svg>
<div class="card" style="left:816px;top:135.6px;width:238px;height:133.6px"></div>
<div class="t" style="left:827px;top:149.4px;font-size:9px;color:#444">AI智能体链接</div>
<div class="abs" style="left:827px;top:168px;width:216.2px;height:21.4px;background:#fff;border:.6px solid #ececec;border-radius:3px;box-sizing:border-box;overflow:hidden"><div class="t" style="right:8.4px;top:6.4px;font-size:8.45px;color:#333">www.doubao.com/chat/7242684819778502713?type=1</div><div class="abs" style="left:0;top:0;width:5.6px;height:21px;background:#fff"></div></div>
<div class="ib" style="left:827px;background:#e4f0fc;border:1px solid #9ecbf3;box-shadow:none"></div>
<div class="ib" style="left:863.2px;"></div>
<div class="ib" style="left:899.2px;"></div>
<div class="ib" style="left:935px;"></div>
<div class="ib" style="left:971.2px;"></div>
<div class="ib" style="left:1007px;"></div>
<svg style="left:833.7px;top:205.7px" width="17.4" height="17.4" viewBox="0 0 20 20"><path d="M10 3.2 L16 6.6 V13.4 L10 16.8 L4 13.4 V6.6 Z" fill="none" stroke="#1b46a8" stroke-width="2.7" stroke-linejoin="round"/><path d="M4 6.6 L10 3.2 L16 6.6" fill="none" stroke="#2385ee" stroke-width="2.7" stroke-linejoin="round" stroke-linecap="round"/><path d="M10 16.4 V11 Q10 9.8 11 9.3 L15.6 6.9" fill="none" stroke="#1f5fc8" stroke-width="2.3" stroke-linecap="round"/></svg>
<svg style="left:870.0px;top:205.8px" width="17.2" height="17.2" viewBox="0 0 20 20"><defs><linearGradient id="p1" x1="0" y1="0" x2="1" y2="1"><stop offset="0" stop-color="#6a4cf0"/><stop offset="1" stop-color="#3b3fd8"/></linearGradient></defs><circle cx="10" cy="10" r="9.4" fill="url(#p1)"/><path d="M10 4.4 C13.4 4.4 15.4 6.8 15.4 9.8 C15.4 11.2 15.8 12 16.4 12.8 C15.6 13.4 14.6 13.2 14.2 14 C13.6 15.2 12.4 14.6 11.6 15.4 C10.8 16.2 9.6 16.2 8.8 15.4 C8 14.6 6.6 15.2 6 14 C5.6 13.2 4.4 13.4 3.6 12.8 C4.2 12 4.6 11.2 4.6 9.8 C4.6 6.8 6.6 4.4 10 4.4Z" fill="#fff"/><path d="M8.2 9.6 L10 11.6 L12.2 9.4" fill="none" stroke="#4a43e0" stroke-width="1.1" stroke-linecap="round" stroke-linejoin="round"/></svg>
<svg style="left:906.0px;top:205.8px" width="17.2" height="17.2" viewBox="0 0 20 20"><defs><clipPath id="c3"><circle cx="10" cy="10" r="9.4"/></clipPath></defs><g clip-path="url(#c3)"><rect width="20" height="20" fill="#d3e4f8"/><path d="M4.4 10.4 C3.6 4.6 6.8 1.8 10.2 1.8 C13.6 1.8 16.2 4.4 15.6 10 C15.4 12.6 15 13.6 14.4 14.6 L5.6 14.6 C5 13.6 4.6 12.6 4.4 10.4Z" fill="#4a3329"/><ellipse cx="10.4" cy="9.8" rx="3.5" ry="4.3" fill="#f3d3c4"/><path d="M6.4 9.4 C7 6 10.4 5.2 13.8 8.4 C14 5 12.2 3.4 10.2 3.4 C7.8 3.4 6.2 5.4 6.4 9.4Z" fill="#4a3329"/><path d="M3.2 20 C3.6 16.2 6.8 15 10 15 C13.2 15 16.4 16.2 16.8 20Z" fill="#23232b"/><path d="M8.8 13.4 H11.6 V15.4 L10.2 16.4 L8.8 15.4Z" fill="#f3d3c4"/></g></svg>
<svg style="left:942.5px;top:206.5px" width="15.8" height="15.8" viewBox="0 0 20 20"><defs><linearGradient id="p4" x1="0" y1="0" x2="1" y2="0"><stop offset="0" stop-color="#b9c4f8"/><stop offset=".6" stop-color="#e9d9f6"/><stop offset="1" stop-color="#fbc3b0"/></linearGradient><linearGradient id="p4b" x1="0" y1="0" x2="1" y2="1"><stop offset="0" stop-color="#7fdcf0"/><stop offset="1" stop-color="#57c3e6"/></linearGradient></defs><circle cx="10" cy="10" r="8.8" fill="url(#p4)"/><path d="M1.4 9.6 C4.6 12 15.4 12 18.6 9.6 C18.8 14.6 14.8 18.8 10 18.8 C5.2 18.8 1.2 14.6 1.4 9.6Z" fill="url(#p4b)"/><path d="M2.4 8.4 C4.8 5.4 15.2 5.4 17.6 8.4 C15.2 10.8 4.8 10.8 2.4 8.4Z" fill="#fbf6fd" opacity=".95"/><path d="M3.4 7.4 C6 5 14 5 16.6 7.4" fill="none" stroke="#d9c9f4" stroke-width=".8"/></svg>
<svg style="left:978.1px;top:205.9px" width="17" height="17" viewBox="0 0 20 20"><defs><linearGradient id="p5" x1="0" y1="0" x2="1" y2="1"><stop offset="0" stop-color="#3a78f2"/><stop offset=".6" stop-color="#6a5cf0"/><stop offset="1" stop-color="#b05af0"/></linearGradient></defs><circle cx="10" cy="10" r="9.2" fill="url(#p5)"/><path d="M4.2 7.4 L8.6 7.6 L10.2 4.4 L12 7.6 L15.8 7.2 L13.2 10.4 L14.6 14.6 L10.8 13 L9.6 10.4 L7.6 14.8 L5.4 14.4 L6.8 10.6 Z" fill="#fff"/><path d="M8.8 8.6 L12.4 8.6 L10.6 11.6Z" fill="#5a5cec"/></svg>
<svg style="left:1013.9px;top:205.9px" width="17" height="17" viewBox="0 0 20 20"><defs><linearGradient id="p6" x1="0" y1="0" x2="1" y2="1"><stop offset="0" stop-color="#6f38ee"/><stop offset="1" stop-color="#4a28c8"/></linearGradient></defs><circle cx="10" cy="10" r="9.2" fill="url(#p6)"/><path d="M10 5.2 L11.7 8.4 L15.3 9 L12.7 11.5 L13.3 15 L10 13.3 L6.7 15 L7.3 11.5 L4.7 9 L8.3 8.4 Z" fill="#fff" stroke="#fff" stroke-width="2.6" stroke-linejoin="round"/><circle cx="8.7" cy="10" r=".75" fill="#5a30d8"/><circle cx="11.5" cy="10" r=".75" fill="#5a30d8"/><path d="M9 11.8 Q10.1 12.8 11.2 11.8" fill="none" stroke="#5a30d8" stroke-width=".7" stroke-linecap="round"/><circle cx="13.6" cy="4.6" r="1.4" fill="#f0584a"/></svg>
<div class="btn" style="left:827px;top:238.6px;width:64.8px;height:19.6px;line-height:19.4px;font-size:8px">插入AI智能体</div>
<div class="btn" style="left:897.8px;top:238.6px;width:57px;height:19.6px;line-height:19.4px;font-size:8px">测试智能体</div>
<div class="card" style="left:816px;top:281px;width:238px;height:312px"></div>
<div class="t" style="left:827px;top:294.6px;font-size:9px;color:#444">平台介绍</div>
<div id="shot" class="abs" style="left:827.4px;top:313.8px;width:215.6px;height:115.2px;border-radius:2px;overflow:hidden;background:#f5f6fb;box-shadow:0 .6px 2px rgba(0,0,0,.28);font-size:3px;color:#333">
<div class="abs" style="left:0.0px;top:0.0px;width:215.6px;height:6.0px;background:#c9cbce;"></div>
<div class="abs" style="left:5.7px;top:1.0px;width:31.0px;height:5.0px;background:#f7f8f9;border-radius:1.2px 1.2px 0 0"></div>
<div class="abs" style="left:1.8px;top:2.2px;width:2.0px;height:2.2px;background:#555;border-radius:.4px"></div>
<div class="abs" style="left:7.2px;top:2.5px;width:1.6px;height:1.6px;background:#2f6be6;border-radius:.8px"></div>
<div class="t" style="left:10.0px;top:1.9px;font-size:2.8px;color:#444;">文心智能体平台AgentBuilder</div>
<div class="t" style="left:38.6px;top:1.6px;font-size:3px;color:#555;">+</div>
<div class="t" style="left:205.6px;top:1.4px;font-size:3px;color:#666;letter-spacing:.3px">– ▢ ×</div>
<div class="abs" style="left:0.0px;top:5.9px;width:215.6px;height:4.6px;background:#f7f8f9;"></div>
<div class="t" style="left:1.8px;top:6.6px;font-size:2.8px;color:#777;">← → ↻</div>
<div class="abs" style="left:13.6px;top:6.7px;width:182.0px;height:3.0px;background:#eef0f3;border-radius:1.5px"></div>
<div class="t" style="left:16.0px;top:6.8px;font-size:2.6px;color:#555;">agents.baidu.com/center</div>
<div class="abs" style="left:198.6px;top:7.0px;width:2.0px;height:2.2px;background:#888;border-radius:1px"></div>
<div class="abs" style="left:202.6px;top:7.0px;width:2.0px;height:2.2px;background:#666;border-radius:.4px"></div>
<div class="abs" style="left:209.2px;top:6.8px;width:2.8px;height:2.8px;background:#3a73d8;border-radius:1.4px"></div>
<div class="abs" style="left:0.0px;top:10.5px;width:31.5px;height:105.0px;background:#fff;"></div>
<div class="abs" style="left:2.2px;top:13.4px;width:3.0px;height:3.4px;background:#2f6be6;border-radius:1.2px 1.2px 1.6px 1.6px"></div>
<div class="t" style="left:6.4px;top:13.8px;font-size:2.2px;color:#333;font-weight:700">文心智能体平台</div>
<div class="abs" style="left:2.8px;top:21.4px;width:26.0px;height:5.2px;background:#3d4be8;border-radius:.8px"></div>
<div class="t" style="left:8.6px;top:22.6px;font-size:2.8px;color:#fff;font-weight:700">+ 创建智能体</div>
<div class="t" style="left:3.8px;top:29.8px;font-size:2.5px;color:#444;">我的智能体</div>
<div class="t" style="left:3.8px;top:35.5px;font-size:2.5px;color:#444;">智能体商店</div>
<div class="t" style="left:3.8px;top:44.0px;font-size:2.6px;color:#aaa;">创作中心</div>
<div class="t" style="left:3.8px;top:49.7px;font-size:2.5px;color:#555;">• 插件中心</div>
<div class="t" style="left:3.8px;top:55.0px;font-size:2.5px;color:#555;">知识库管理</div>
<div class="t" style="left:3.8px;top:60.7px;font-size:2.5px;color:#555;">工作流编排</div>
<div class="t" style="left:3.8px;top:66.5px;font-size:2.5px;color:#555;">数据集管理</div>
<div class="t" style="left:3.8px;top:72.0px;font-size:2.5px;color:#555;">模型调优</div>
<div class="t" style="left:3.8px;top:82.0px;font-size:2.6px;color:#aaa;">帮助</div>
<div class="t" style="left:3.8px;top:87.6px;font-size:2.5px;color:#555;">开发文档</div>
<div class="t" style="left:3.8px;top:93.2px;font-size:2.5px;color:#555;">社区交流</div>
<div class="t" style="left:3.8px;top:98.7px;font-size:2.5px;color:#555;">意见反馈</div>
<div class="abs" style="left:3.6px;top:108.0px;width:2.6px;height:3.4px;background:#fff;border:.4px solid #aaa;border-radius:.6px;box-sizing:border-box"></div>
<div class="t" style="left:8.0px;top:108.4px;font-size:2.8px;color:#555;">消息通知</div>
<div class="abs" style="left:21.8px;top:108.2px;width:6.8px;height:3.6px;background:#4653e6;border-radius:1.8px"></div>
<div class="abs" style="left:31.5px;top:10.7px;width:179.4px;height:44.6px;background:linear-gradient(100deg,#fba441 0%,#f8932a 35%,#f8962c 70%,#fa9a2f 100%);border-radius:1.6px 0 0 1.6px"></div>
<div class="abs" style="left:31.5px;top:48.2px;width:179.4px;height:7.1px;background:linear-gradient(180deg,rgba(244,126,18,0),rgba(244,126,18,.85))"></div>
<div class="t" style="left:37.0px;top:19.8px;font-size:9.1px;color:#fff;font-weight:700;letter-spacing:-.1px;text-shadow:0 0 .8px rgba(255,255,255,.6)">双十一AI省心购</div>
<div class="t" style="left:37.4px;top:30.8px;font-size:3.7px;color:#ffe9cc;font-weight:700;letter-spacing:.06px">7大会场必买，精选AI好物特惠</div>
<div class="abs" style="left:152.0px;top:14.9px;width:40.8px;height:4.4px;background:#fdf4e4;border-radius:.8px"></div>
<div class="t" style="left:154.0px;top:15.6px;font-size:2.6px;color:#c9a46a;">搜索</div>
<div class="abs" style="left:187.6px;top:16.2px;width:2.4px;height:2.0px;background:#8a7ad0;border-radius:1px"></div>
<div class="abs" style="left:195.2px;top:14.6px;width:11.8px;height:5.0px;background:#5060e2;border-radius:1.2px"></div>
<div class="t" style="left:197.2px;top:15.7px;font-size:2.6px;color:#fff;font-weight:700">登录/注册</div>
<div class="abs" style="left:35.5px;top:41.8px;width:171.2px;height:10.0px;background:rgba(255,226,190,.62);border-radius:1.4px"></div>
<div class="abs" style="left:38.4px;top:44.5px;width:4.4px;height:4.4px;background:#fff7ea;border-radius:2.2px"></div>
<div class="abs" style="left:39.8px;top:45.9px;width:1.6px;height:1.6px;background:#8a7ad0;border-radius:.8px"></div>
<div class="t" style="left:45.2px;top:44.2px;font-size:2.8px;color:#3a2a1a;font-weight:700">AI绘画</div>
<div class="t" style="left:45.2px;top:47.6px;font-size:2.4px;color:#9a7a55;">海量风格一键生成</div>
<div class="abs" style="left:81.6px;top:44.5px;width:4.4px;height:4.4px;background:#fff7ea;border-radius:2.2px"></div>
<div class="abs" style="left:83.0px;top:45.9px;width:1.6px;height:1.6px;background:#8a7ad0;border-radius:.8px"></div>
<div class="t" style="left:88.4px;top:44.2px;font-size:2.8px;color:#3a2a1a;font-weight:700">AI写作</div>
<div class="t" style="left:88.4px;top:47.6px;font-size:2.4px;color:#9a7a55;">高效创作助手</div>
<div class="abs" style="left:124.7px;top:44.5px;width:4.4px;height:4.4px;background:#fff7ea;border-radius:2.2px"></div>
<div class="abs" style="left:126.1px;top:45.9px;width:1.6px;height:1.6px;background:#8a7ad0;border-radius:.8px"></div>
<div class="t" style="left:131.5px;top:44.2px;font-size:2.8px;color:#3a2a1a;font-weight:700">AI陪伴</div>
<div class="t" style="left:131.5px;top:47.6px;font-size:2.4px;color:#9a7a55;">你的专属虚拟伙伴</div>
<div class="abs" style="left:167.5px;top:44.5px;width:4.4px;height:4.4px;background:#fff7ea;border-radius:2.2px"></div>
<div class="abs" style="left:168.9px;top:45.9px;width:1.6px;height:1.6px;background:#8a7ad0;border-radius:.8px"></div>
<div class="t" style="left:174.3px;top:44.2px;font-size:2.8px;color:#3a2a1a;font-weight:700">Agent开发</div>
<div class="t" style="left:174.3px;top:47.6px;font-size:2.4px;color:#9a7a55;">零代码创建智能体</div>
<svg style="left:127.6px;top:14.2px" width="44" height="36" viewBox="955 328 44 36"><g transform="rotate(-5 978 346)"><rect x="964" y="333.4" width="28.6" height="26.6" rx="1.2" fill="#f9a13c" stroke="#fdeccd" stroke-width="1.3"/></g><path d="M963 345 L966 347 L964.4 343.6Z M958.6 339.6 L962.6 341.4 L961.6 345 L958.4 343.4Z" fill="#ee4c3a"/><path d="M989.6 336.4 L995.6 337.6 L995 345 L988.6 343.8Z" fill="#f2525a"/><path d="M991 336.6 Q992.8 333.6 994.2 337.2" fill="none" stroke="#f2525a" stroke-width=".7"/><path d="M967 340 L970 341.4" stroke="#fff" stroke-width=".6"/><ellipse cx="978.4" cy="338.6" rx="3.6" ry="3.8" fill="#2b2433"/><ellipse cx="978.8" cy="339.8" rx="2.2" ry="2.5" fill="#f6d3bf"/><path d="M977 342.4 L983.2 342.8 L984.6 351.6 L978.8 352.8 L975.6 347.2Z" fill="#2f7fe0"/><path d="M976.4 346 L968.4 351.6 L964.6 354.6 L967.2 357.4 L972.4 354.6 L979.8 352.4Z" fill="#fff6f0"/><path d="M978 352.6 L973.4 358.6 L976.2 360 L981.4 353.4Z" fill="#fbe9e0"/><path d="M961.4 352.6 L966.6 355.4 L965.2 357.4 L961 355.2Z" fill="#1d1d22"/><path d="M982.6 350 L988.4 348 L990.4 357 L983.6 358.6Z" fill="#e9a13a"/><path d="M984 349 L987 346.6 L988.6 351Z" fill="#4fae8a"/></svg>
<div class="abs" style="left:211.6px;top:12.2px;width:1.1px;height:17.2px;background:#6a6a6a;border-radius:.5px"></div>
<div class="t" style="left:36.9px;top:59.2px;font-size:2.6px;color:#2f6be6;font-weight:700">全部分类</div>
<div class="t" style="left:49.6px;top:59.2px;font-size:2.6px;color:#666;">热门</div>
<div class="t" style="left:57.6px;top:59.2px;font-size:2.6px;color:#666;">情感陪伴</div>
<div class="t" style="left:70.6px;top:59.2px;font-size:2.6px;color:#666;">创意写作</div>
<div class="t" style="left:82.6px;top:59.2px;font-size:2.6px;color:#666;">教育</div>
<div class="t" style="left:89.6px;top:59.2px;font-size:2.6px;color:#666;">AI绘画</div>
<div class="t" style="left:99.6px;top:59.2px;font-size:2.6px;color:#666;">娱乐</div>
<div class="t" style="left:108.2px;top:59.2px;font-size:2.6px;color:#666;">职场办公</div>
<div class="t" style="left:120.6px;top:59.2px;font-size:2.6px;color:#666;">游戏</div>
<div class="t" style="left:127.6px;top:59.2px;font-size:2.6px;color:#666;">生活</div>
<div class="t" style="left:134.6px;top:59.2px;font-size:2.6px;color:#666;">健康</div>
<div class="t" style="left:141.6px;top:59.2px;font-size:2.6px;color:#666;">法律</div>
<div class="t" style="left:148.6px;top:59.2px;font-size:2.6px;color:#666;">金融</div>
<div class="t" style="left:155.6px;top:59.2px;font-size:2.6px;color:#666;">旅行</div>
<div class="t" style="left:177.6px;top:59.2px;font-size:2.6px;color:#777;">最新发布</div>
<div class="t" style="left:191.2px;top:59.2px;font-size:2.6px;color:#777;">最热</div>
<div class="t" style="left:200.0px;top:59.2px;font-size:2.6px;color:#777;">筛选</div>
<div class="abs" style="left:35.6px;top:65.8px;width:1.6px;height:2.2px;background:#333;border-radius:.4px"></div>
<div class="t" style="left:37.8px;top:65.8px;font-size:2.6px;color:#555;">榜单</div>
<div class="abs" style="left:35.2px;top:71.6px;width:33.4px;height:27.2px;background:#fff;border-radius:1.4px"></div>
<div class="abs" style="left:35.8px;top:71.8px;width:2.6px;height:2.8px;background:#e83a3a;border-radius:1.3px 1.3px 1.3px .3px"></div>
<div class="abs" style="left:47.7px;top:73.5px;width:8.4px;height:8.4px;border-radius:4.2px;background:radial-gradient(circle at 60% 45%,#5fa6c8 0 28%,#2f3b4a 60%)"></div>
<div class="t c" style="left:51.9px;top:84.1px;font-size:3.1px;color:#222;font-weight:700">小侃星座</div>
<div class="t c" style="left:51.9px;top:87.4px;font-size:2.6px;color:#888">深度解读十二星座运势</div>
<div class="t c" style="left:51.9px;top:90.5px;font-size:2.6px;color:#555;font-weight:700">爱情 事业</div>
<div class="t c" style="left:51.9px;top:94.4px;font-size:2.5px;color:#aaa">@星座达人</div>
<div class="abs" style="left:70.2px;top:71.6px;width:33.4px;height:27.2px;background:#fff;border-radius:1.4px"></div>
<div class="abs" style="left:70.9px;top:71.8px;width:2.6px;height:2.8px;background:#f39a2a;border-radius:1.3px 1.3px 1.3px .3px"></div>
<div class="abs" style="left:82.8px;top:73.5px;width:8.4px;height:8.4px;border-radius:4.2px;background:radial-gradient(circle at 60% 45%,#c9ccd2 0 28%,#4a4f57 60%)"></div>
<div class="t c" style="left:87.0px;top:84.1px;font-size:3.1px;color:#222;font-weight:700">EasyDL助手</div>
<div class="t c" style="left:87.0px;top:87.4px;font-size:2.6px;color:#888">零门槛AI开发平台助手</div>
<div class="t c" style="left:87.0px;top:90.5px;font-size:2.6px;color:#555;font-weight:700">技术 开发</div>
<div class="t c" style="left:87.0px;top:94.4px;font-size:2.5px;color:#aaa">@百度智能云</div>
<div class="abs" style="left:105.3px;top:71.6px;width:33.4px;height:27.2px;background:#fff;border-radius:1.4px"></div>
<div class="abs" style="left:105.9px;top:71.8px;width:2.6px;height:2.8px;background:#f5be3a;border-radius:1.3px 1.3px 1.3px .3px"></div>
<div class="abs" style="left:117.8px;top:73.5px;width:8.4px;height:8.4px;border-radius:4.2px;background:radial-gradient(circle at 60% 45%,#8a5a7a 0 28%,#33284a 60%)"></div>
<div class="t c" style="left:122.0px;top:84.1px;font-size:3.1px;color:#222;font-weight:700">说图解画</div>
<div class="t c" style="left:122.0px;top:87.4px;font-size:2.6px;color:#888">看图说话，妙笔生花</div>
<div class="t c" style="left:122.0px;top:90.5px;font-size:2.6px;color:#555;font-weight:700">创意 绘画</div>
<div class="t c" style="left:122.0px;top:94.4px;font-size:2.5px;color:#aaa">@文心一格</div>
<div class="abs" style="left:140.4px;top:71.6px;width:33.4px;height:27.2px;background:#fff;border-radius:1.4px"></div>
<div class="abs" style="left:141.0px;top:71.8px;width:2.6px;height:2.8px;background:#cfd3da;border-radius:1.3px 1.3px 1.3px .3px"></div>
<div class="abs" style="left:152.9px;top:73.5px;width:8.4px;height:8.4px;border-radius:4.2px;background:radial-gradient(circle at 60% 45%,#c96a4a 0 28%,#f3e6dc 60%)"></div>
<div class="t c" style="left:157.1px;top:84.1px;font-size:3.1px;color:#222;font-weight:700">职场加油站</div>
<div class="t c" style="left:157.1px;top:87.4px;font-size:2.6px;color:#888">你的职场成长教练</div>
<div class="t c" style="left:157.1px;top:90.5px;font-size:2.6px;color:#555;font-weight:700">职场 效率</div>
<div class="t c" style="left:157.1px;top:94.4px;font-size:2.5px;color:#aaa">@职场研究所</div>
<div class="abs" style="left:175.4px;top:71.6px;width:33.4px;height:27.2px;background:#fff;border-radius:1.4px"></div>
<div class="abs" style="left:176.0px;top:71.8px;width:2.6px;height:2.8px;background:#cfd3da;border-radius:1.3px 1.3px 1.3px .3px"></div>
<div class="abs" style="left:187.9px;top:73.5px;width:8.4px;height:8.4px;border-radius:4.2px;background:radial-gradient(circle at 60% 45%,#c9a07a 0 28%,#4a5a7a 60%)"></div>
<div class="t c" style="left:192.1px;top:84.1px;font-size:3.1px;color:#222;font-weight:700">AI旅行规划师</div>
<div class="t c" style="left:192.1px;top:87.4px;font-size:2.6px;color:#888">一键生成旅行攻略</div>
<div class="t c" style="left:192.1px;top:90.5px;font-size:2.6px;color:#555;font-weight:700">旅行 出行</div>
<div class="t c" style="left:192.1px;top:94.4px;font-size:2.5px;color:#aaa">@旅行家</div>
<div class="t" style="left:35.8px;top:101.6px;font-size:3.3px;color:#222;font-weight:700">热门推荐</div>
<div class="abs" style="left:35.2px;top:106.8px;width:56.6px;height:12.0px;background:#fff;border-radius:1.4px"></div>
<div class="abs" style="left:37.2px;top:108.5px;width:7px;height:7px;border-radius:3.5px;background:radial-gradient(circle at 55% 45%,#e0a070 0 30%,#3a3f6a 62%)"></div>
<div class="t" style="left:45.8px;top:109.4px;font-size:2.9px;color:#222;font-weight:700">超级心理咨询师</div>
<div class="t" style="left:45.8px;top:112.7px;font-size:2.6px;color:#666;">专业倾听，温暖陪伴，解答你的心理困惑</div>
<div class="abs" style="left:93.6px;top:106.8px;width:56.6px;height:12.0px;background:#fff;border-radius:1.4px"></div>
<div class="abs" style="left:95.6px;top:108.5px;width:7px;height:7px;border-radius:3.5px;background:radial-gradient(circle at 55% 45%,#c98a5a 0 30%,#f0e6dc 62%)"></div>
<div class="t" style="left:104.2px;top:109.4px;font-size:2.9px;color:#222;font-weight:700">小红书文案</div>
<div class="t" style="left:104.2px;top:112.7px;font-size:2.6px;color:#666;">一键生成爆款种草笔记文案</div>
<div class="abs" style="left:152.0px;top:106.8px;width:56.6px;height:12.0px;background:#fff;border-radius:1.4px"></div>
<div class="abs" style="left:154.0px;top:108.5px;width:7px;height:7px;border-radius:3.5px;background:radial-gradient(circle at 55% 45%,#d9c9a9 0 30%,#5a6a5a 62%)"></div>
<div class="t" style="left:162.6px;top:109.4px;font-size:2.9px;color:#222;font-weight:700">农民院士智能体</div>
<div class="t" style="left:162.6px;top:112.7px;font-size:2.6px;color:#666;">朱有勇院士团队打造的农技问答助手</div>
</div>
<div class="t" style="left:827px;top:445px;font-size:10.2px;font-weight:700;color:#222">平台名称：百度智能体</div>
<div class="btn" style="left:998.4px;top:439px;width:44.8px;height:19.2px;line-height:19px;font-size:8px;border-radius:2.6px">前往平台</div>
<div class="abs" style="left:827px;top:464px;width:18.6px;height:14.4px;background:#1fb57c;border-radius:2px;color:#fff;font-weight:700;font-size:6.3px;line-height:13.2px;text-align:center">免费</div>
<div class="abs" style="left:850.8px;top:464px;width:31px;height:14.4px;background:#f39c1f;border-radius:2px;color:#fff;font-weight:700;font-size:6.3px;line-height:13.2px;text-align:center;white-space:nowrap">有付费版</div>
<div class="t" style="left:890.6px;top:465.8px;font-size:10.6px;color:#f5b423;letter-spacing:-.15px;font-family:'DejaVu Sans',sans-serif">★★★★<span style="color:#f8d38a">★</span></div>
<div class="t" style="left:942.2px;top:466.2px;font-size:11.4px;font-weight:700;color:#2f6ce8">4.8</div>
<div class="t" style="left:961.8px;top:468.4px;font-size:7px;color:#7a7a7a">分</div>
<div class="t" style="left:827px;top:489.6px;font-size:6.8px;color:#999">平台介绍:</div>
<div class="pt" style="top:501.3px;font-size:7.8px;margin-left:-2px;letter-spacing:0.15px">【母公司】百度（<span class="la">Baidu</span>），中国领先的互联网科技公司，在</div>
<div class="pt" style="top:513.6px;font-size:7.8px;margin-left:0px;letter-spacing:0.08px"><span class="la">AI</span>领域深耕多年，拥有强大的技术积累和研发实力。</div>
<div class="pt" style="top:538.3px;font-size:7.8px;margin-left:-2px;letter-spacing:0.04px">【技术实力】基于百度自研的文心大模型（<span class="la">ERNIE</span>），在自然</div>
<div class="pt" style="top:550.6px;font-size:7.8px;margin-left:0px;letter-spacing:0.03px">语言处理、知识图谱、多模态<span class="la">AI</span>等方面技术先进。百度智能体</div>
<div class="pt" style="top:562.9px;font-size:7.8px;margin-left:0px;letter-spacing:0.03px">平台集成了文心大模型的多项核心能力，包括语义理解、知识</div>
<div class="pt" style="top:575.2px;font-size:7.8px;margin-left:0px;letter-spacing:0.25px">推理、内容生成等。</div>
</div>

<!-- ================= STATUS BAR ================= -->
<div class="abs" id="status"></div>
<div id="statuscontent">
 <div class="t st" style="left:6.6px;letter-spacing:.2px">幻灯片 第 1 张，共 1 张</div>
 <svg style="left:90.4px;top:597.6px" width="7.6" height="7" viewBox="0 0 7.6 7"><path d="M3.8 1.2 C3 .5 1.6 .4 .5 .6 V5.6 C1.6 5.4 3 5.5 3.8 6.3 C4.6 5.5 6 5.4 7.1 5.6 V.6 C6 .4 4.6 .5 3.8 1.2Z M3.8 1.2 V6.2" fill="none" stroke="#444" stroke-width=".7"/></svg>
 <svg style="left:108.2px;top:597.2px" width="7.6" height="7.8" viewBox="0 0 7.6 7.8"><circle cx="3.4" cy="1.2" r=".9" fill="none" stroke="#444" stroke-width=".6"/><path d="M.5 2.8 H6.3 M3.4 2.8 V5 M3.4 5 L1.8 7.4 M3.4 5 L4.6 6.4" fill="none" stroke="#444" stroke-width=".7"/><path d="M5 5.6 L6 6.8 L7.3 4.6" fill="none" stroke="#444" stroke-width=".6"/></svg>
 <div class="t st" style="left:118.6px">辅助功能: 一切就绪</div>
 <svg style="left:804px;top:597.4px" width="9" height="7.4" viewBox="0 0 9 7.4"><path d="M4.5 .4 L6.6 2.6 H2.4Z" fill="none" stroke="#444" stroke-width=".6"/><path d="M.2 3.8 H8.8 M.2 5.4 H8.8 M.2 7 H8.8" stroke="#444" stroke-width=".65"/></svg>
 <div class="t st" style="left:814.2px">备注</div>
 <svg style="left:839px;top:597.6px" width="8.4" height="7.4" viewBox="0 0 8.4 7.4"><path d="M.4 .4 H8 V5.2 H3.4 L1.6 7 V5.2 H.4Z" fill="none" stroke="#444" stroke-width=".7"/></svg>
 <div class="t st" style="left:848.8px">批注</div>
 <div class="abs" style="left:873.8px;top:593px;width:20.4px;height:14px;background:#d5d8d5"></div>
 <svg style="left:879.8px;top:597.4px" width="8.4" height="7.4" viewBox="0 0 8.4 7.4"><rect x=".4" y=".4" width="7.6" height="6.6" fill="none" stroke="#333" stroke-width=".75"/><path d="M2.6 .4 V7 M4 2.4 H6.6 V4.8 H4Z" fill="none" stroke="#333" stroke-width=".7"/></svg>
 <svg style="left:902.4px;top:597.4px" width="8" height="7.6" viewBox="0 0 8 7.6"><path d="M.4 .4 H3.2 V3 H.4Z M4.8 .4 H7.6 V3 H4.8Z M.4 4.6 H3.2 V7.2 H.4Z M4.8 4.6 H7.6 V7.2 H4.8Z" fill="none" stroke="#444" stroke-width=".7"/></svg>
 <svg style="left:924.6px;top:597.4px" width="8.4" height="7.4" viewBox="0 0 8.4 7.4"><rect x=".4" y=".4" width="7.6" height="6.6" fill="none" stroke="#444" stroke-width=".7"/><path d="M2 .4 V7 M6.4 .4 V7 M3.4 .6 V6.8 M5 .6 V6.8" stroke="#444" stroke-width=".5"/></svg>
 <svg style="left:947px;top:597.2px" width="8.4" height="8" viewBox="0 0 8.4 8"><path d="M.2 .4 H8.2 M1 .4 V4.6 H7.4 V.4 M4.2 4.6 V7 M2.6 7.4 H5.8" fill="none" stroke="#444" stroke-width=".7"/><path d="M3.2 1.8 H5.4 M4.2 1.8 V3.4" stroke="#555" stroke-width=".5"/></svg>
 <div class="abs" style="left:966.6px;top:600.7px;width:4px;height:.7px;background:#444"></div>
 <div class="abs" style="left:974.6px;top:600.7px;width:54.4px;height:.7px;background:#8a8d8a"></div>
 <div class="abs" style="left:998px;top:597.6px;width:2px;height:7px;background:#444"></div>
 <div class="abs" style="left:1001px;top:599.6px;width:.7px;height:3px;background:#8a8d8a"></div>
 <div class="abs" style="left:1032.4px;top:600.7px;width:4.2px;height:.7px;background:#444"></div>
 <div class="abs" style="left:1034.15px;top:598.9px;width:.7px;height:4.2px;background:#444"></div>
 <div class="t st" style="left:1045px;font-size:6.9px">89%</div>
 <svg style="left:1069.4px;top:597px" width="8.6" height="8.6" viewBox="0 0 8.6 8.6"><rect x="2.6" y="2.6" width="3.4" height="3.4" fill="none" stroke="#444" stroke-width=".7"/><path d="M4.3 .3 L5.6 1.8 H3Z M4.3 8.3 L5.6 6.8 H3Z M.3 4.3 L1.8 3 V5.6Z M8.3 4.3 L6.8 3 V5.6Z" fill="none" stroke="#444" stroke-width=".6"/></svg>
</div>

<!-- red arrow annotation -->
 <svg width="1080" height="607" style="left:0;top:0;pointer-events:none">
  <path d="M819.2 118.2 L757.5 170.2 M820.8 120.2 L759.5 172.4" stroke="#e0292b" stroke-width="0.9" fill="none"/>
  <path d="M751.2 179.6 L754.8 167.6 L762.6 175.4 Z" fill="#e4292c"/>
 </svg>
</body>
</html>
